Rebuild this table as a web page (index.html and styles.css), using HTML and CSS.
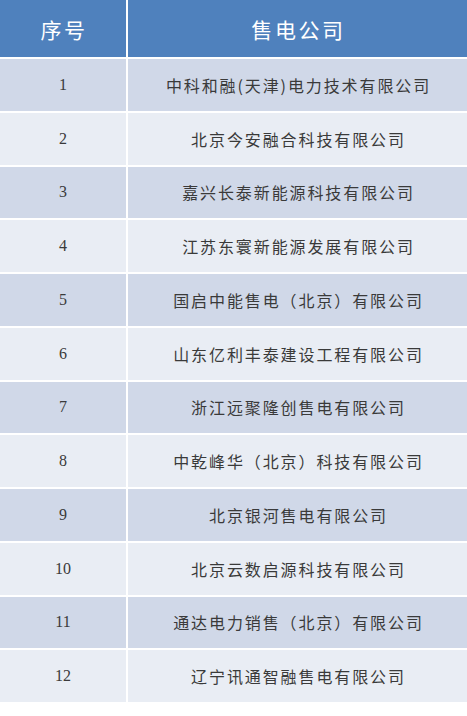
FILE: index.html
```html
<!DOCTYPE html>
<html lang="zh-CN">
<head>
<meta charset="utf-8">
<link rel="stylesheet" href="styles.css">
</head>
<body>
<div class="table">
  <div class="cell head num-col">序号</div>
  <div class="cell head">售电公司</div>

  <div class="cell odd num">1</div><div class="cell odd name">中科和融(天津)电力技术有限公司</div>
  <div class="cell even num">2</div><div class="cell even name">北京今安融合科技有限公司</div>
  <div class="cell odd num">3</div><div class="cell odd name">嘉兴长泰新能源科技有限公司</div>
  <div class="cell even num">4</div><div class="cell even name">江苏东寰新能源发展有限公司</div>
  <div class="cell odd num">5</div><div class="cell odd name">国启中能售电（北京）有限公司</div>
  <div class="cell even num">6</div><div class="cell even name">山东亿利丰泰建设工程有限公司</div>
  <div class="cell odd num">7</div><div class="cell odd name">浙江远聚隆创售电有限公司</div>
  <div class="cell even num">8</div><div class="cell even name">中乾峰华（北京）科技有限公司</div>
  <div class="cell odd num">9</div><div class="cell odd name">北京银河售电有限公司</div>
  <div class="cell even num">10</div><div class="cell even name">北京云数启源科技有限公司</div>
  <div class="cell odd num">11</div><div class="cell odd name">通达电力销售（北京）有限公司</div>
  <div class="cell even num">12</div><div class="cell even name">辽宁讯通智融售电有限公司</div>
</div>
</body>
</html>
```
FILE: styles.css
```css
html, body {
  margin: 0;
  padding: 0;
  background: #ffffff;
}
.table {
  display: grid;
  grid-template-columns: 126px 1fr;
  grid-template-rows: 57px repeat(12, 51.75px);
  column-gap: 2px;
  row-gap: 2px;
  width: 467px;
  background: #ffffff;
}
.cell {
  display: flex;
  align-items: center;
  justify-content: center;
  font-family: "Noto Sans CJK SC", "Liberation Serif", serif;
  color: #3a3a3a;
  font-size: 16px;
  letter-spacing: 1.9px;
}
.head {
  background: #4f81bd;
  color: #ffffff;
  font-size: 21px;
  letter-spacing: 2.6px;
  padding-left: 2px;
}
.odd { background: #d0d8e8; }
.even { background: #e9edf4; }
.num {
  font-family: "Liberation Serif", serif;
  letter-spacing: 0;
  font-size: 16px;
}
.name { padding-left: 2px; }
```
